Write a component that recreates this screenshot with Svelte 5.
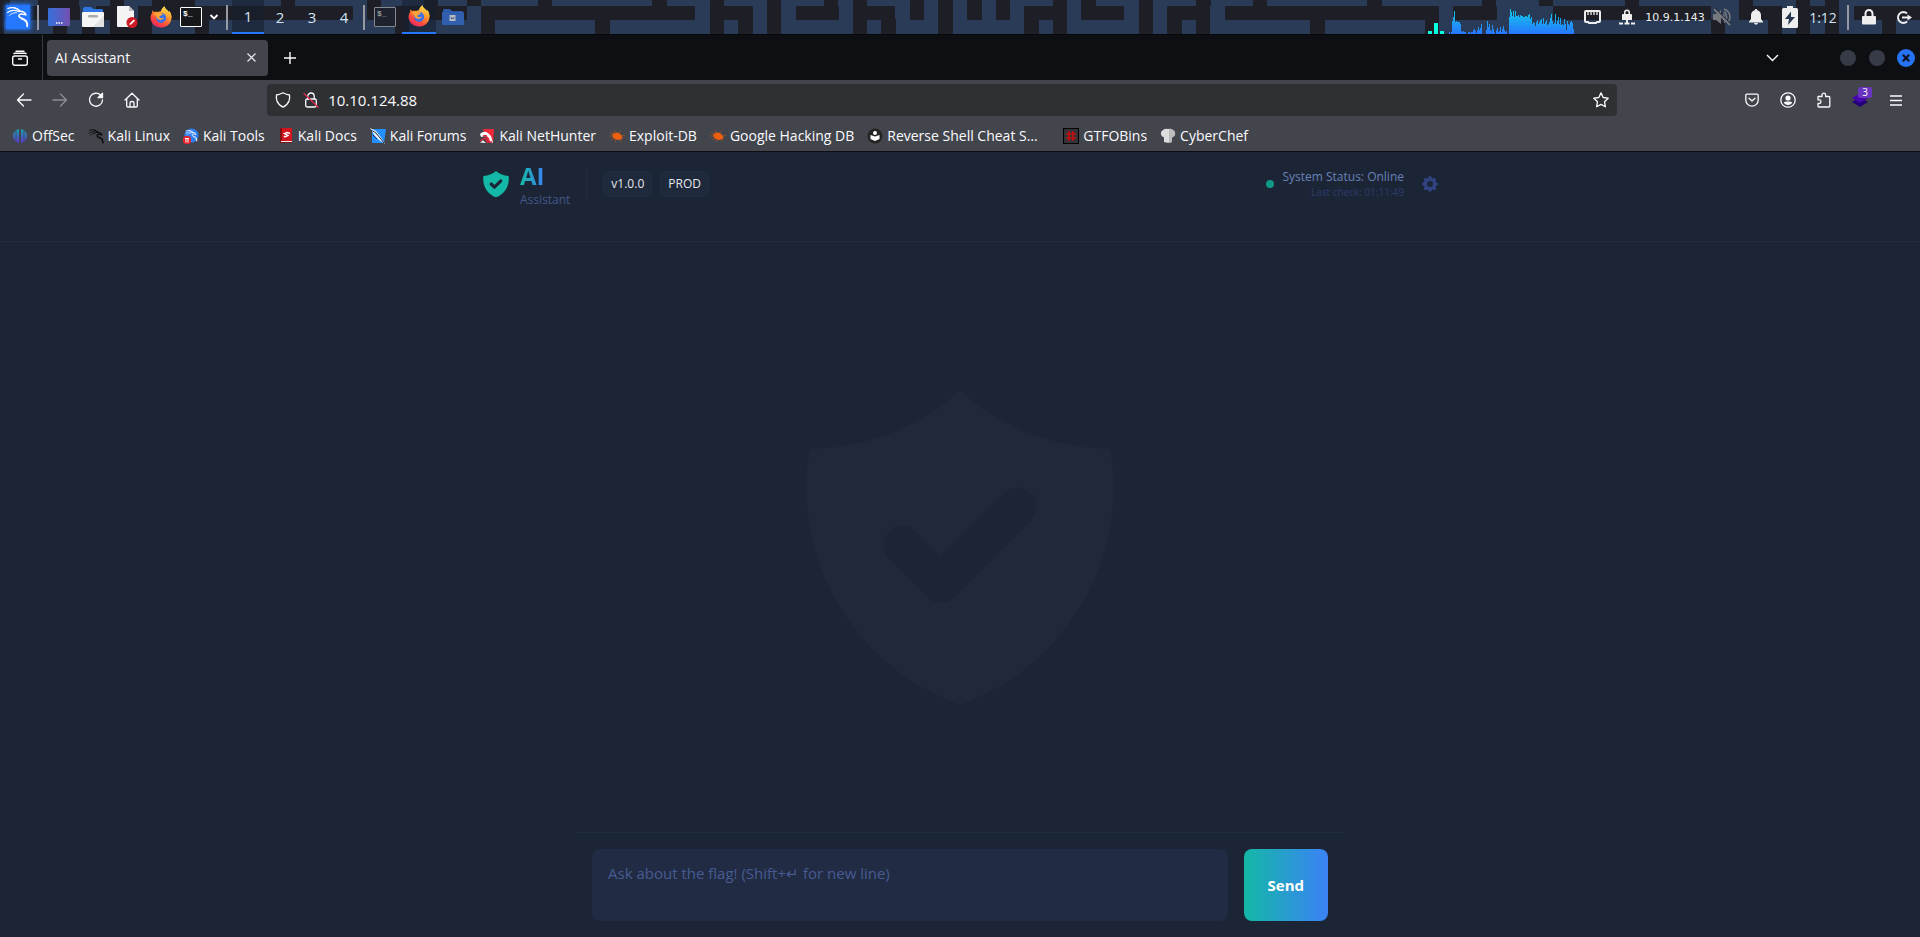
<script>
  let message = $state('');

  const bookmarks = [
    ['offsec', 'OffSec'],
    ['kali', 'Kali Linux'],
    ['tools', 'Kali Tools'],
    ['docs', 'Kali Docs'],
    ['forums', 'Kali Forums'],
    ['nethunter', 'Kali NetHunter'],
    ['bug', 'Exploit-DB'],
    ['bug', 'Google Hacking DB'],
    ['revshell', 'Reverse Shell Cheat S…'],
    ['gtfo', 'GTFOBins'],
    ['chef', 'CyberChef']
  ];

  // Dark corridors of the wallpaper behind the panel, as [x, width] per row.
  const top = [[0, 10], [38, 41], [110, 14], [152, 43], [281, 14], [367, 14], [424, 14], [467, 14], [538, 14], [652, 15], [710, 14], [767, 14], [824, 14], [853, 14], [910, 14], [938, 15], [967, 15], [996, 14], [1053, 14], [1081, 15], [1139, 14], [1196, 15], [1253, 14], [1367, 15], [1482, 14], [1539, 14], [1625, 14], [1739, 14], [1796, 14], [1825, 14]];
  const mid = [[0, 10], [24, 56], [96, 28], [138, 215], [367, 14], [395, 72], [481, 214], [710, 43], [767, 14], [796, 43], [853, 42], [910, 14], [938, 15], [967, 15], [996, 14], [1024, 43], [1081, 43], [1139, 14], [1167, 43], [1225, 214], [1453, 44], [1553, 158], [1739, 43], [1796, 43], [1854, 66]];
  const low = [[0, 4], [53, 14], [82, 13], [110, 42], [195, 14], [395, 14], [481, 14], [595, 15], [710, 14], [738, 15], [767, 14], [853, 14], [881, 15], [938, 15], [1024, 15], [1053, 14], [1139, 14], [1167, 15], [1196, 14], [1310, 15], [1425, 14], [1711, 14], [1768, 14], [1796, 14], [1825, 14], [1882, 14]];

  const cpu = [0, 2, 0, 2, 13, 17, 23, 12, 13, 12, 12, 12, 10, 3, 2, 3, 2, 2, 0, 0, 2, 2, 1, 2, 2, 4, 5, 3, 1, 4, 7, 4, 6, 10, 0, 0, 0, 0, 4, 13, 7, 10, 4, 3, 9, 5, 2, 0, 4, 6, 2, 3, 7, 2, 5, 8, 4, 2, 3];
  const net = [17, 25, 22, 18, 23, 17, 23, 18, 18, 19, 17, 19, 18, 18, 17, 17, 18, 18, 17, 19, 20, 15, 17, 10, 12, 11, 8, 12, 14, 10, 12, 14, 15, 10, 16, 10, 12, 14, 9, 10, 12, 16, 20, 13, 10, 11, 20, 10, 13, 17, 10, 16, 9, 10, 9, 15, 10, 4, 13, 10, 9, 12, 13, 11, 5];
</script>

{#snippet shieldCheck()}
  <svg class="shield" viewBox="0 0 20 20" fill="currentColor" aria-hidden="true">
    <path fill-rule="evenodd" clip-rule="evenodd" d="M2.166 4.999A11.954 11.954 0 0010 1.944 11.954 11.954 0 0017.834 5c.11.65.166 1.32.166 2.001 0 5.225-3.34 9.67-8 11.317C5.34 16.67 2 12.225 2 7c0-.682.057-1.35.166-2.001zm11.541 3.708a1 1 0 00-1.414-1.414L9 10.586 7.707 9.293a1 1 0 00-1.414 1.414l2 2a1 1 0 001.414 0l4-4z" />
  </svg>
{/snippet}

{#snippet firefox()}
  <svg width="22" height="22" viewBox="0 0 22 22" aria-hidden="true">
    <path d="M2.6 4.2C2 5 2.1 6 2.3 6.7 1 8.5.5 10.2.6 12.3 1 17.6 5.400 21.600 11 21.600c5.800 0 10.500-4.300 10.500-10.100 0-2.400-.8-5-2.600-6.700.3.700.5 1.300.5 2C18.600 4.900 16.700 3.900 15.700 2.800 14.900 2 14.600 1.200 14.600.300c-2.300 1.400-3.300 3.700-3.500 5.200-1.100 0-1.900.3-2.500.6C6.500 5.500 5.400 5.800 4.500 6.100 3.700 5.700 2.900 5 2.600 4.200z" fill="url(#fx-body)" />
    <circle cx="11.200" cy="12" r="5" fill="#3d6fe8" />
    <path d="M8.200 6.300c1.100-.8 2-.8 2.900-.8-.4.900-.1 1.800 1.100 2.300.8.300.7.900.1 1.200l-2.400 1.100c-.9.600-.5 1.700.5 2 1.700.5 2.200-.900 3.500-.300-1 1.600-2.600 2.400-4.300 2-2-.4-3.200-2.100-3.300-4.100L3 7.900c1.900-1 3.700-1 5.200-1.600z" fill="#ffa436" />
    <path d="M14.600.300c-2.300 1.400-3.200 3.300-3.500 5.200 2.900.1 5.400 2.500 5.300 6.100 0 2.800-1.800 4.500-3.900 5.300 3.800.8 8-1.300 8.900-5.900C21.400 8.600 20.500 6 18.900 4.800c.3.700.5 1.300.5 2-1.200-2.300-4.700-3-4.800-6.500z" fill="url(#fx-flame)" />
  </svg>
{/snippet}

{#snippet dragon(color)}
  <g fill="none" stroke={color} stroke-linecap="round" stroke-linejoin="round">
    <path d="M2 3.500C6 1.500 11 3 14 6.200" stroke-width="1.300" />
    <path d="M1.500 7.500C5 5 9 4.800 12.500 6.500" stroke-width="1.100" />
    <path d="M3.500 10.500C5 8.500 8 7.500 10.500 7.700" stroke-width=".9" />
    <path d="M13 6.500c3-.7 5.500.5 7 3.300l-3.200-.6c-3-.7-5 1.200-3.200 3 1.700 1.500 5.300 1.600 6.900 4.100.9 1.600 1 3.200.7 5.200" stroke-width="1.600" />
    <path d="M8 2.500q4 .5 6.500 3.500M15 14c3 .7 5.500 2.500 6.300 7" stroke-width=".9" />
  </g>
{/snippet}

<svg class="defs" width="0" height="0" aria-hidden="true">
  <defs>
    <linearGradient id="fx-body" x1="0.8" y1="0" x2="0.2" y2="1">
      <stop offset="0.150" stop-color="#ffd84a" /><stop offset="0.450" stop-color="#ff8a2c" /><stop offset="0.700" stop-color="#ff4a3d" /><stop offset="1" stop-color="#e8236b" />
    </linearGradient>
    <linearGradient id="fx-flame" x1="0.500" y1="0" x2="0.300" y2="1">
      <stop offset="0" stop-color="#ffe14d" /><stop offset="0.550" stop-color="#ffa22e" /><stop offset="1" stop-color="#ff5a38" />
    </linearGradient>
    <linearGradient id="desk" x1="0" y1="0" x2="1" y2="0">
      <stop offset="0" stop-color="#3570dc" /><stop offset="1" stop-color="#7350b0" />
    </linearGradient>
    <linearGradient id="graph" gradientUnits="userSpaceOnUse" x1="0" y1="0" x2="0" y2="26">
      <stop offset="0" stop-color="#10d0e8" /><stop offset="1" stop-color="#2777ff" />
    </linearGradient>
    <linearGradient id="offsec" x1="0" y1="0" x2="0" y2="1">
      <stop offset="0" stop-color="#18a0b0" /><stop offset="1" stop-color="#5a38d0" />
    </linearGradient>
  </defs>
</svg>

<div class="screen">
  <div class="panel">
    <svg class="maze" height="34" width="1920" viewBox="0 0 1920 34" aria-hidden="true">
      <rect width="1920" height="34" fill="#293b57" />
      <g fill="#1d1e26">
        {#each top as [x, w]}<rect {x} y="0" width={w} height="6" />{/each}
        {#each mid as [x, w]}<rect {x} y="6" width={w} height="14" rx="1" />{/each}
        {#each low as [x, w]}<rect {x} y="19" width={w} height="15" />{/each}
      </g>
    </svg>

    <button class="slot w36" aria-label="Applications">
      <span class="kali-logo"><svg width="24" height="24" viewBox="0 0 24 24">{@render dragon('#fff')}</svg></span>
    </button>
    <span class="slot w4"><i class="rule"></i></span>
    <button class="slot w38" aria-label="Show desktop">
      <svg width="22" height="18" viewBox="0 0 22 18"><rect width="22" height="18" rx="1" fill="url(#desk)" /><path d="M8 15h1.500M10.500 15H12M13 15h1.500" stroke="#fff" stroke-width="1.500" /></svg>
    </button>
    <button class="slot w30" aria-label="Files">
      <svg width="22" height="20" viewBox="0 0 22 20"><path d="M1 1.500Q1 0 2.500 0H9l2.500 2H20q1 0 1 1v4H1z" fill="#2f74e0" /><rect y="5" width="22" height="15" rx="1" fill="#f5f5f5" /><path d="M22 9v11H11z" fill="#e2e2e2" /><rect x="6" y="8" width="10" height="2.500" rx="1.200" fill="#aaa" /></svg>
    </button>
    <button class="slot w38" aria-label="Text editor">
      <svg width="21" height="22" viewBox="0 0 21 22"><path d="M1 0h11l5 5v16H1q-1 0-1-1V1q0-1 1-1z" fill="#f4f4f4" /><path d="M12 0v5h5z" fill="#bbb" /><circle cx="15" cy="16.500" r="5.500" fill="#cc1b24" /><path d="M12.500 19l.5-1.700 3.800-3.800 1.200 1.200-3.800 3.800z" fill="#fff" /></svg>
    </button>
    <button class="slot w30" aria-label="Firefox">{@render firefox()}</button>
    <button class="slot w30" aria-label="Terminal"><span class="term">$_</span></button>
    <button class="slot w16" aria-label="More terminals">
      <svg width="10" height="6" viewBox="0 0 10 6"><path d="M1.500 1L5 4.500 8.500 1" fill="none" stroke="#fff" stroke-width="1.800" /></svg>
    </button>
    <span class="slot w10"><i class="rule"></i></span>
    {#each [1, 2, 3, 4] as n}
      <button class="slot workspace" class:active={n === 1}>{n}</button>
    {/each}
    <span class="slot w8"><i class="rule"></i></span>
    <button class="slot w34 dim" aria-label="Terminal window"><span class="term">$_</span></button>
    <button class="slot w34 active" aria-label="Firefox window">{@render firefox()}</button>
    <button class="slot w34 dim" aria-label="Files window">
      <svg width="22" height="16" viewBox="0 0 22 16"><path d="M1 1q0-1 1-1h6l2 2h10q1 0 1 1v2H1z" fill="#2a59a8" /><rect y="3" width="22" height="13" rx="1" fill="#315fae" /><rect x="7.500" y="6" width="6" height="6" fill="#b6bac2" /><path d="M9 9.500h3M9 9V8m3 1V8" stroke="#4a628a" /></svg>
    </button>

    <span class="grow"></span>

    <svg class="graphs" width="146" height="26" viewBox="0 0 146 26" role="img" aria-label="System load">
      <g fill="#08ffe0"><rect y="23" width="4" height="3" /><rect x="6" y="15" width="4" height="11" /><rect x="12" y="23" width="4" height="3" /></g>
      <g fill="url(#graph)">
        {#each cpu as h, i}<rect x={20 + i} y={26 - h} width="1" height={h} />{/each}
        {#each net as h, i}<rect x={81 + i} y={26 - h} width="1" height={h} />{/each}
      </g>
    </svg>
    <span class="slot w36"><svg width="17" height="14" viewBox="0 0 17 14" fill="none" stroke="#eee" stroke-width="2"><path d="M2 1h13q1 0 1 1v9q0 1-1 1h-2l-1 1H5l-1-1H2q-1 0-1-1V2q0-1 1-1z" /><path d="M4 2v3M7 2v3M10 2v3M13 2v3" stroke-width="1.300" /></svg></span>
    <span class="slot w34"><svg width="16" height="17" viewBox="0 0 16 17"><path d="M5 5V3.500a3 3 0 016 0V5h1q1 0 1 1v5H3V6q0-1 1-1zm1.500 0h3V3.500a1.500 1.500 0 00-3 0z" fill="#eee" fill-rule="evenodd" /><path d="M0 14.500h4M5.500 14.500h5M12 14.500h4M8 11v3" stroke="#eee" stroke-width="2" /></svg></span>
    <span class="slot ip">10.9.1.143</span>
    <span class="slot w32"><svg width="18" height="18" viewBox="0 0 18 18" fill="none" stroke="#75787f" stroke-width="1.600"><path d="M0 6h3l5-4v14l-5-4H0z" fill="#75787f" stroke="none" /><path d="M10 6a4 4 0 010 6M11 3.500a7 7 0 010 11M11 1a9 9 0 016 8 8 8 0 01-1.500 4.500" /><path d="M1.500 0l16 16" stroke="#1d2230" stroke-width="1.500" /><path d="M1 1l16 16" stroke-width="2" /></svg></span>
    <span class="slot w36"><svg width="14" height="16" viewBox="0 0 14 16" fill="#eee"><path d="M7 0q1.300 0 1.300 1.300C11 2 12 4 12 6.500V10l2 2.700v.8H0v-.8L2 10V6.500C2 4 3 2 5.700 1.300 5.700.400 6.200 0 7 0zM5 14h4q-.5 1.800-2 1.800T5 14z" /></svg></span>
    <span class="slot w32"><svg width="16" height="22" viewBox="0 0 16 22"><path d="M1.500 2H5V0h6v2h3.500Q16 2 16 3.500v17q0 1.500-1.500 1.500h-13Q0 22 0 20.500v-17Q0 2 1.500 2z" fill="#eee" /><path d="M9 5.500L3 13h4l-1 6 7-8H9z" fill="#25344f" /></svg></span>
    <span class="slot clock">1:12</span>
    <span class="slot w16"><i class="rule"></i></span>
    <button class="slot w26" aria-label="Lock screen"><svg width="14" height="16" viewBox="0 0 14 16"><path d="M2.500 7V4.500a4.500 4.500 0 019 0V7H13q1 0 1 1v6.500q0 1-1 1H1q-1 0-1-1V8q0-1 1-1zm2 0h5V4.500a2.500 2.500 0 00-5 0z" fill="#eee" fill-rule="evenodd" /></svg></button>
    <button class="slot w38 logout" aria-label="Log out"><svg width="15" height="13" viewBox="0 0 15 13" fill="none" stroke="#eee" stroke-width="2"><path d="M10 2.500A5.200 5.200 0 006.500 1a5.400 5.400 0 000 11A5.200 5.200 0 0010 10.500" /><path d="M5 6.500h7" /><path d="M10.500 3.500l4.500 3-4.500 3z" fill="#eee" stroke="none" /></svg></button>
  </div>

  <div class="tabs">
    <button class="view" aria-label="Recent browsing">
      <svg width="16" height="16" viewBox="0 0 16 16" fill="none" stroke="#fbfbfe" stroke-width="1.400" stroke-linecap="round"><path d="M4 1.200h8M2 3.500Q2.500 3.300 3.500 3.300h9q1 0 1.500.2" /><rect x=".7" y="6" width="14.600" height="9.300" rx="2" /><path d="M6.500 9h3" /></svg>
    </button>
    <div class="tab">
      <span>AI Assistant</span>
      <button aria-label="Close tab"><svg width="9" height="9" viewBox="0 0 9 9"><path d="M.5.5l8 8M8.500.5l-8 8" stroke="#e6e6ea" stroke-width="1.200" /></svg></button>
    </div>
    <button class="tool" aria-label="New tab"><svg width="12" height="12" viewBox="0 0 12 12"><path d="M6 0v12M0 6h12" stroke="#fbfbfe" stroke-width="1.400" /></svg></button>
    <span class="grow"></span>
    <button class="tool list" aria-label="List all tabs"><svg width="13" height="8" viewBox="0 0 13 8"><path d="M1 1l5.500 5.500L12 1" fill="none" stroke="#fbfbfe" stroke-width="1.400" /></svg></button>
    <button class="win" aria-label="Minimize"><i></i></button>
    <button class="win" aria-label="Maximize"><i></i></button>
    <button class="win close" aria-label="Close"><i><svg width="8" height="8" viewBox="0 0 8 8"><path d="M.8.8l6.400 6.400M7.200.8L.8 7.200" stroke="#0d1220" stroke-width="2.200" /></svg></i></button>
  </div>

  <div class="nav">
    <button class="tool" aria-label="Back"><svg width="16" height="16" viewBox="0 0 16 16" class="line"><path d="M15 8H1.500M7.500 2l-6 6 6 6" /></svg></button>
    <button class="tool off" aria-label="Forward"><svg width="16" height="16" viewBox="0 0 16 16" class="line"><path d="M1 8h13.500M8.500 2l6 6-6 6" /></svg></button>
    <button class="tool" aria-label="Reload"><svg width="16" height="16" viewBox="0 0 16 16" class="line"><path d="M12.700 3.200A6.500 6.500 0 1014.500 8" /><path d="M14.500 1.300v4.400h-4.400z" fill="#fbfbfe" /></svg></button>
    <button class="tool" aria-label="Home"><svg width="16" height="16" viewBox="0 0 16 16" class="line"><path d="M1 8l7-6.800L15 8M2.700 6.800v7q0 1.200 1.200 1.200h8.200q1.200 0 1.200-1.200v-7M6 15v-4q0-1.500 2-1.500t2 1.500v4" /></svg></button>
    <span class="spring"></span>
    <label class="url">
      <svg width="16" height="16" viewBox="0 0 16 16" class="line"><path d="M8 .8Q11.500 2.700 14.500 3 15 6 14 9q-1.500 4-6 6.200Q3.500 13 2 9 1 6 1.500 3 4.500 2.700 8 .8z" /></svg>
      <svg width="16" height="16" viewBox="0 0 16 16" class="line"><rect x="2.700" y="7" width="10.600" height="8" rx="1.500" /><path d="M4.800 7V4.200a3.200 3.200 0 016.400 0V7" /><path d="M1 1.500l14 13.500" stroke="#e22850" /></svg>
      <input value="10.10.124.88" aria-label="Address" />
      <svg width="16" height="16" viewBox="0 0 16 16" class="line"><path d="M8 .9l2.200 4.600 5 .7-3.700 3.500.9 5.100L8 12.400l-4.400 2.400.9-5.100L.8 6.200l5-.7z" /></svg>
    </label>
    <span class="spring"></span>
    <button class="tool" aria-label="Pocket"><svg width="14" height="14" viewBox="0 0 14 14" class="line"><path d="M2 1.200h10q1.200 0 1.200 1.200V7a6.200 6.200 0 01-12.400 0V2.400Q.8 1.200 2 1.200zM4 5.200L7 8l3-2.800" /></svg></button>
    <button class="tool" aria-label="Account"><svg width="16" height="16" viewBox="0 0 16 16" class="line"><circle cx="8" cy="8" r="7.200" /><circle cx="8" cy="6" r="2.600" fill="#fbfbfe" stroke="none" /><path d="M3.800 10.300q1-.8 4.200-.8t4.200.8q-1 2.700-4.200 2.700t-4.200-2.700z" fill="#fbfbfe" stroke="none" /></svg></button>
    <button class="tool" aria-label="Extensions"><svg width="16" height="16" viewBox="0 0 16 16" class="line"><path d="M2 4.500h4V3a1.800 1.800 0 013.600 0v1.500h3.200q1 0 1 1V14q0 1-1 1H3q-1 0-1-1v-2.500h1.200a1.800 1.800 0 000-3.600H2z" /></svg></button>
    <button class="tool wapp" aria-label="Extension with 3 results">
      <svg width="16" height="14" viewBox="0 0 16 14"><path d="M0 9l8-5 8 5-8 5z" fill="#230075" /><path d="M0 5l8-5 8 5-8 5z" fill="#4608ad" /></svg>
      <b>3</b>
    </button>
    <button class="tool" aria-label="Menu"><svg width="12" height="11" viewBox="0 0 12 11"><path d="M0 1h12M0 5.500h12M0 10h12" stroke="#fbfbfe" stroke-width="1.300" /></svg></button>
  </div>

  <div class="bookmarks">
    {#each bookmarks as [icon, name]}
      <a href="#{icon}" class:long={icon === 'revshell'}>
        <svg width="16" height="16" viewBox="0 0 16 16" aria-hidden="true">
          {#if icon === 'offsec'}
            <path d="M7 1v14C3 14 1 11 1 8s2-6 6-7zM9 1v14c4-1 6-4 6-7S13 2 9 1z" fill="url(#offsec)" /><path d="M4 2.500v11M12 2.500v11" stroke="#43454d" stroke-width=".8" />
          {:else if icon === 'kali'}
            <g transform="scale(.7)">{@render dragon('#050505')}</g>
          {:else if icon === 'tools'}
            <circle cx="8.500" cy="7.500" r="7" fill="#2f7ff0" /><g transform="translate(2 1) scale(.55)">{@render dragon('#fff')}</g><rect y="8" width="8" height="8" rx="3" fill="#e8232b" /><path d="M2 10.500h4M3 10.500v4M5 10.500v4" stroke="#fff" />
          {:else if icon === 'docs'}
            <path d="M2 0h12v13H2z" fill="#d2141c" /><path d="M2 0h2v15H2zM2 13.500h12v1.500H2z" fill="#7d1116" /><path d="M3 13.500h11" stroke="#eee" /><path d="M12 5.500L9 4.500 6.500 5.500 10 7.500 7 9l-1-1" fill="none" stroke="#fff" stroke-width="1.400" />
          {:else if icon === 'forums'}
            <path d="M2 1h14l-2 14H2z" fill="#2490ff" /><path d="M0 0l6 3 4 5 5 8-6-4-4-4z" fill="#f4f8ff" /><path d="M1 2l5 3 8 10M3 7l4 4" stroke="#182d54" fill="none" />
          {:else if icon === 'nethunter'}
            <path d="M4 1h11l-1 13-4 1z" fill="#f02838" /><path d="M1 6q4-4 8-1 3 2 4 6l1 4-3-1-1-4-4-2-4 1z" fill="#fff" /><path d="M4 8q4-2 4 2t5 4M1 13l5-3 3 5" fill="none" stroke="#dc2339" stroke-width="1.300" /><path d="M1 14.500l3-2 3 2.500z" fill="#fff" />
          {:else if icon === 'bug'}
            <path d="M3 6.500q3-3 6.500-1.500 4 1.500 4 5.500-3.500 2.500-7 .8Q3 9.800 3 6.500z" fill="#ef5f10" /><path d="M1 4l4 3M0 8h4M2 12l3-2M5 2l2 4M9 5l3-2M12 8l4-.5M10 11l3 3M7 11l-1 3" stroke="#a8501f" stroke-width=".7" />
          {:else if icon === 'revshell'}
            <circle cx="8" cy="8" r="7.500" fill="#242424" /><path d="M3.500 7L8 8.500 12.500 7v4L8 13l-4.500-2z" fill="#fff" /><circle cx="8" cy="5" r="2" fill="#fff" />
          {:else if icon === 'gtfo'}
            <rect x=".5" y=".5" width="15" height="15" fill="#33343a" stroke="#000" /><path d="M6 3v10M10 3v10M3 6h10M3 10h10" stroke="#c80e10" stroke-width="1.600" />
          {:else}
            <path d="M4 9.500A4 4 0 013 2a5 5 0 015-1 5 5 0 015 1 4 4 0 01-1 7.500V14q-4 1.500-8 0z" fill="#ddd" /><path d="M9 1a5 5 0 014 1 4 4 0 01-1 7.500V14l-3 .7z" fill="#bbb" />
          {/if}
        </svg>
        <span>{name}</span>
      </a>
    {/each}
  </div>

  <div class="page">
    <div class="watermark">{@render shieldCheck()}</div>

    <header>
      <div class="inner">
        <div class="brand">
          <span class="mark">{@render shieldCheck()}</span>
          <div class="names">
            <h1>AI</h1>
            <p>Assistant</p>
          </div>
        </div>
        <div class="badges"><span>v1.0.0</span><span>PROD</span></div>
        <div class="status">
          <i></i>
          <div>
            <p>System Status: Online</p>
            <small>Last check: 01:11:49</small>
          </div>
        </div>
        <button class="gear" aria-label="Settings">
          <svg width="20" height="20" viewBox="0 0 20 20" fill="currentColor"><path fill-rule="evenodd" clip-rule="evenodd" d="M11.490 3.170c-.38-1.560-2.600-1.560-2.980 0a1.532 1.532 0 01-2.286.948c-1.372-.836-2.942.734-2.106 2.106.54.886.061 2.042-.947 2.287-1.561.379-1.561 2.600 0 2.978a1.532 1.532 0 01.947 2.287c-.836 1.372.734 2.942 2.106 2.106a1.532 1.532 0 012.287.947c.379 1.561 2.600 1.561 2.978 0a1.533 1.533 0 012.287-.947c1.372.836 2.942-.734 2.106-2.106a1.533 1.533 0 01.947-2.287c1.561-.379 1.561-2.600 0-2.978a1.532 1.532 0 01-.947-2.287c.836-1.372-.734-2.942-2.106-2.106a1.532 1.532 0 01-2.287-.947zM10 13a3 3 0 100-6 3 3 0 000 6z" /></svg>
        </button>
      </div>
    </header>

    <main></main>

    <form onsubmit={(e) => e.preventDefault()}>
      <textarea bind:value={message} aria-label="Message" placeholder="Ask about the flag! (Shift+↵ for new line)"></textarea>
      <button>Send</button>
    </form>
  </div>
</div>

<style>
  :global(body) {
    margin: 0;
    background: #1c2536;
  }
  .screen,
  .screen button,
  .screen input,
  .screen textarea {
    font-family: 'Open Sans', sans-serif;
  }
  .screen {
    display: flex;
    flex-direction: column;
    min-height: 100vh;
    color: #fbfbfe;
    font-size: 14px;
  }
  .screen * {
    box-sizing: border-box;
  }
  .defs {
    position: absolute;
  }
  button {
    margin: 0;
    padding: 0;
    border: 0;
    background: none;
    color: inherit;
    font-size: inherit;
  }
  svg {
    display: block;
    flex: none;
  }
  .grow {
    flex: 1;
  }

  /* Desktop panel */
  .panel {
    position: relative;
    display: flex;
    height: 34px;
    overflow: hidden;
    background: #293b57;
  }
  .maze {
    position: absolute;
    top: 0;
    left: 0;
  }
  .slot {
    position: relative;
    display: flex;
    flex: none;
    align-items: center;
    justify-content: center;
    height: 34px;
  }
  .w4 { width: 4px; }
  .w8 { width: 8px; }
  .w10 { width: 10px; }
  .w16 { width: 16px; }
  .w26 { width: 26px; }
  .w30 { width: 30px; }
  .w32, .workspace { width: 32px; }
  .w34 { width: 34px; }
  .w36 { width: 36px; }
  .w38 { width: 38px; }
  .rule {
    width: 2px;
    height: 25px;
    background: #9699a1;
  }
  .kali-logo {
    background: #2478ff;
    box-shadow: 0 0 4px 1px #2478ff;
  }
  .term {
    width: 22px;
    height: 20px;
    padding-left: 2px;
    border: 1px solid #fff;
    border-radius: 1px;
    background: #17181b;
    font: bold 8px/11px 'Liberation Mono', monospace;
    text-align: left;
  }
  .dim .term {
    border-color: #85888f;
    background: #1d222e;
    color: #999;
  }
  .workspace {
    color: #d3e4f4;
    font-size: 15px;
  }
  .slot.active {
    border-bottom: 2px solid #2478ff;
    background: #15202f99;
  }
  .graphs {
    position: relative;
    align-self: flex-end;
  }
  .ip {
    width: 62px;
    color: #eee;
    font: 11px 'DejaVu Sans', sans-serif;
    white-space: nowrap;
  }
  .clock {
    width: 34px;
    color: #d3e4f4;
  }
  .logout {
    padding-left: 6px;
  }

  /* Browser tabs */
  .tabs {
    display: flex;
    align-items: center;
    height: 46px;
    border-top: 1px solid #08090b;
    background: #0e0f12;
  }
  .view {
    display: flex;
    align-items: center;
    align-self: stretch;
    width: 43px;
    margin-right: 4px;
    padding-left: 12px;
    border-right: 1px solid #3a3b40;
  }
  .tab {
    display: flex;
    align-items: center;
    justify-content: space-between;
    width: 221px;
    height: 36px;
    padding: 0 12px 0 8px;
    border-radius: 4px;
    background: #43454d;
  }
  .tool {
    display: flex;
    flex: none;
    align-items: center;
    justify-content: center;
    width: 36px;
    height: 36px;
  }
  .tab + .tool {
    margin-left: 4px;
  }
  .list {
    margin-right: 43px;
  }
  .win {
    display: flex;
    align-items: center;
    justify-content: center;
    width: 29px;
    height: 36px;
  }
  .win i {
    display: flex;
    align-items: center;
    justify-content: center;
    width: 16px;
    height: 16px;
    border-radius: 50%;
    background: #373b48;
  }
  .win.close i {
    width: 18px;
    height: 18px;
    background: #2673f5;
  }

  /* Address bar row */
  .nav {
    display: flex;
    align-items: center;
    height: 40px;
    padding: 0 6px;
    background: #43454d;
  }
  .line {
    fill: none;
    stroke: #fbfbfe;
    stroke-width: 1.300;
    stroke-linecap: round;
    stroke-linejoin: round;
  }
  .off {
    opacity: 0.4;
  }
  .spring {
    flex: 13;
  }
  .url {
    display: flex;
    flex: 148;
    align-items: center;
    gap: 12px;
    height: 32px;
    padding: 0 8px;
    border-radius: 4px;
    background: #2f3034;
  }
  .url input {
    flex: 1;
    min-width: 0;
    padding: 0;
    margin-left: -3px;
    border: 0;
    outline: 0;
    background: none;
    color: #fbfbfe;
    font-size: 15px;
  }
  .wapp {
    position: relative;
  }
  .wapp b {
    position: absolute;
    top: 5px;
    right: 6px;
    width: 14px;
    border-radius: 2px;
    background: #6a35bf;
    font-size: 10px;
    font-weight: 400;
    line-height: 11px;
    text-align: center;
  }
  .bookmarks {
    display: flex;
    align-items: center;
    gap: 13px;
    height: 32px;
    padding: 0 12px;
    border-bottom: 1px solid #0c0d10;
    background: #43454d;
  }
  .bookmarks a {
    display: flex;
    align-items: center;
    gap: 4px;
    color: #fbfbfe;
    text-decoration: none;
    white-space: nowrap;
  }
  .bookmarks .long {
    min-width: 183px;
  }

  /* Chat page */
  .page {
    position: relative;
    display: flex;
    flex: 1;
    flex-direction: column;
    background: #1c2536;
  }
  .watermark {
    position: absolute;
    inset: 0;
    display: flex;
    align-items: center;
    justify-content: center;
    color: #20293a;
    pointer-events: none;
  }
  .watermark .shield {
    width: 384px;
    height: 384px;
  }
  header {
    border-bottom: 1px solid #222c3e;
  }
  .inner {
    display: flex;
    align-items: center;
    max-width: 960px;
    margin: 0 auto;
    padding: 8px 0 33px;
  }
  .brand {
    display: flex;
    align-items: center;
    gap: 8px;
    padding-right: 16px;
  }
  .mark {
    color: #14b8a6;
  }
  .mark .shield {
    width: 32px;
    height: 32px;
  }
  h1,
  p {
    margin: 0;
  }
  h1 {
    width: max-content;
    background: linear-gradient(to right, #14b8a6, #3b82f6);
    background-clip: text;
    color: transparent;
    font-size: 24px;
    font-weight: 700;
    line-height: 32px;
  }
  .names p {
    color: #465788;
    font-size: 12px;
    line-height: 16px;
  }
  .badges {
    display: flex;
    align-items: center;
    gap: 8px;
    height: 32px;
    padding-left: 16px;
    border-left: 1px solid #222c3e;
  }
  .badges span {
    padding: 4px 7px;
    border: 1px solid #212c3f;
    border-radius: 6px;
    background: #1e293c;
    color: #e5e7eb;
    font-size: 12px;
    line-height: 16px;
  }
  .status {
    display: flex;
    align-items: center;
    gap: 8px;
    margin: 0 16px 0 auto;
    text-align: right;
  }
  .status i {
    width: 8px;
    height: 8px;
    border-radius: 50%;
    background: #129888;
  }
  .status p {
    color: #6880b6;
    font-size: 12px;
    line-height: 16px;
  }
  .status small {
    display: block;
    color: #2d3b6c;
    font-size: 10px;
    line-height: 15px;
  }
  .gear {
    color: #304282;
  }
  main {
    flex: 1;
  }
  form {
    display: flex;
    gap: 16px;
    width: 100%;
    max-width: 768px;
    margin: 0 auto;
    padding: 16px;
    border-top: 1px solid #1f2e40;
  }
  textarea {
    flex: 1;
    height: 72px;
    padding: 12px 16px;
    border: 0;
    border-radius: 8px;
    outline: 0;
    background: #212b43;
    color: #e5e7eb;
    font-size: 15px;
    line-height: 24px;
    resize: none;
  }
  textarea::placeholder {
    color: #475b92;
  }
  form button {
    padding: 0 24px;
    border-radius: 8px;
    background: linear-gradient(to right, #14b8a6, #3b82f6);
    color: #fff;
    font-size: 15px;
    font-weight: 700;
  }
</style>
